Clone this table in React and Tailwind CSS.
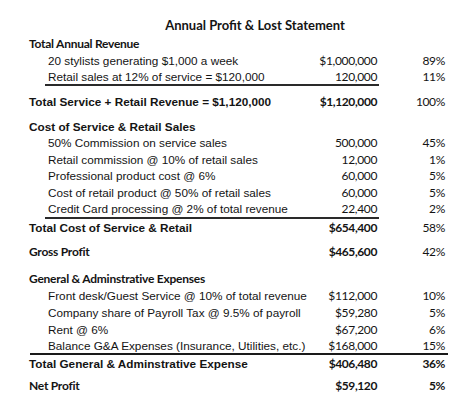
import React from 'react';

const arial = "font-['Liberation_Sans',Arial,sans-serif]";
const calibri = "font-['Lato','Open_Sans',sans-serif]";

// one line of the statement: label, amount, percent
const Row = ({ label, amount, pct, indent, labelCls, numCls, pctCls, h = 'h-[17px]', mt = '' }) => (
  <div className={`flex items-center ${h} ${mt} whitespace-nowrap`}>
    <div className={`flex-1 min-w-0 ${indent ? 'pl-[19px]' : ''} ${labelCls}`}>{label}</div>
    <div className={`w-[80px] text-right ${numCls}`}>{amount}</div>
    <div className={`w-[68px] text-right ${pctCls}`}>{pct}</div>
  </div>
);

const item = `${arial} text-[11.75px]`;
const itemNum = `${calibri} text-[12px] tracking-[-0.35px]`;
const head = `${arial} text-[11.75px] font-bold`;
const headC = `${calibri} text-[12px] font-bold tracking-[-0.25px]`;
const headNum = `${calibri} text-[12px] font-bold tracking-[-0.4px]`;

const App = () => {
  return (
    <div className="w-[474px] h-[417px] bg-white text-[#141414] pt-[17px]">
      <div className={`h-[18px] flex items-center justify-center pl-[36px] ${calibri} text-[13px] font-bold`}>
        Annual Profit &amp; Lost Statement
      </div>

      <div className="ml-[29px] w-[416px]">
        <Row label="Total Annual Revenue" labelCls={headC} />
        <Row indent label="20 stylists generating $1,000 a week" amount="$1,000,000" pct="89%" labelCls={item} numCls={itemNum} pctCls={itemNum} />
        <Row indent label="Retail sales at 12% of service = $120,000" amount="120,000" pct="11%" labelCls={item} numCls={itemNum} pctCls={itemNum} h="h-[15px]" />
        <div className="ml-[16px] w-[334px] h-[2px] bg-[#2a2a2a]" />

        <Row mt="mt-[7px]" label="Total Service + Retail Revenue = $1,120,000" amount="$1,120,000" pct="100%" labelCls={head} numCls={headNum} pctCls={itemNum} />

        <Row mt="mt-[8px]" label="Cost of Service & Retail Sales" labelCls={head} />
        <Row indent h="h-[16.5px]" label="50% Commission on service sales" amount="500,000" pct="45%" labelCls={item} numCls={itemNum} pctCls={itemNum} />
        <Row indent h="h-[16.5px]" label="Retail commission @ 10% of retail sales" amount="12,000" pct="1%" labelCls={item} numCls={itemNum} pctCls={itemNum} />
        <Row indent h="h-[16.5px]" label="Professional product cost @ 6%" amount="60,000" pct="5%" labelCls={item} numCls={itemNum} pctCls={itemNum} />
        <Row indent h="h-[16.5px]" label="Cost of retail product @ 50% of retail sales" amount="60,000" pct="5%" labelCls={item} numCls={itemNum} pctCls={itemNum} />
        <Row indent h="h-[16px]" label="Credit Card processing @ 2% of total revenue" amount="22,400" pct="2%" labelCls={item} numCls={itemNum} pctCls={itemNum} />
        <div className="ml-[16px] w-[334px] h-[2px] bg-[#2a2a2a]" />
        <Row label="Total Cost of Service & Retail" amount="$654,400" pct="58%" labelCls={head} numCls={headNum} pctCls={itemNum} />

        <Row mt="mt-[7px]" label="Gross Profit" amount="$465,600" pct="42%" labelCls={headC} numCls={headNum} pctCls={itemNum} />

        <Row mt="mt-[10px]" label="General & Adminstrative Expenses" labelCls={headC} />
        <Row indent label="Front desk/Guest Service @ 10% of total revenue" amount="$112,000" pct="10%" labelCls={item} numCls={itemNum} pctCls={itemNum} />
        <Row indent label="Company share of Payroll Tax @ 9.5% of payroll" amount="$59,280" pct="5%" labelCls={item} numCls={itemNum} pctCls={itemNum} />
        <Row indent label="Rent @ 6%" amount="$67,200" pct="6%" labelCls={item} numCls={itemNum} pctCls={itemNum} />
        <Row indent h="h-[15px]" label="Balance G&A Expenses (Insurance, Utilities, etc.)" amount="$168,000" pct="15%" labelCls={item} numCls={itemNum} pctCls={itemNum} />
        <div className="ml-[1px] w-[418px] h-[2px] bg-[#1a1a1a]" />
        <Row label="Total General & Adminstrative Expense" amount="$406,480" pct="36%" labelCls={head} numCls={headNum} pctCls={headNum} />

        <Row mt="mt-[5px]" label="Net Profit" amount="$59,120" pct="5%" labelCls={headC} numCls={headNum} pctCls={headNum} />
      </div>
    </div>
  );
};

export default App;
